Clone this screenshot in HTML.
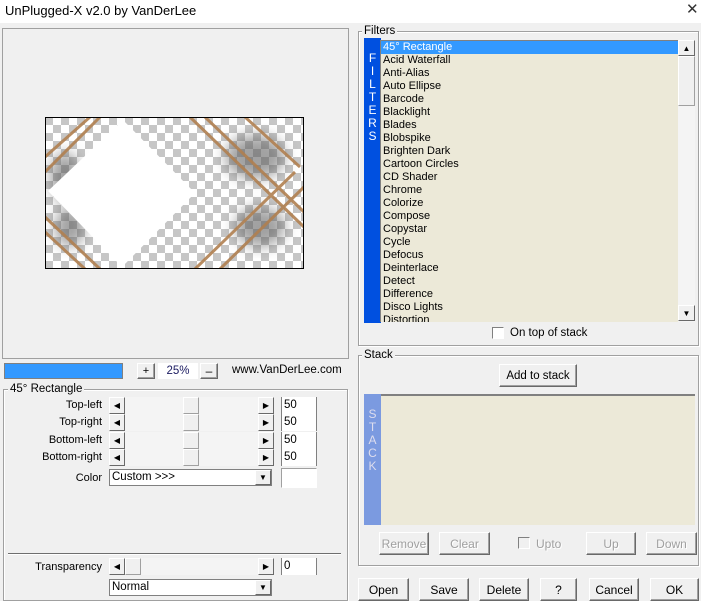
<!DOCTYPE html>
<html><head><meta charset="utf-8"><style>
*{box-sizing:border-box;margin:0;padding:0}
body{width:701px;height:601px;background:#f0f0f0;font-family:"Liberation Sans",Arial,sans-serif;font-size:11px;color:#000;position:relative;overflow:hidden}
.a{position:absolute}
.grp{position:absolute;border:1px solid #a0a0a0;box-shadow:inset 1px 1px 0 #fff, 1px 1px 0 #fff}
.lg{position:absolute;background:#f0f0f0;padding:0 2px;font-size:11px;line-height:12px}
.btn{position:absolute;background:#f0f0f0;border:1px solid;border-color:#fff #696969 #696969 #fff;box-shadow:inset -1px -1px 0 #a0a0a0;text-align:center;font-size:12px;display:flex;align-items:center;justify-content:center}
.dis{color:#a0a0a0;text-shadow:1px 1px 0 #fff}
.sl{position:absolute;height:17px;background:#f4f4f4}
.arr{position:absolute;width:16px;height:17px;background:#f0f0f0;border:1px solid;border-color:#fff #696969 #696969 #fff;font-size:8px;display:flex;align-items:center;justify-content:center}
.th{position:absolute;width:16px;height:17px;background:#f0f0f0;border:1px solid;border-color:#fff #a0a0a0 #a0a0a0 #fff}
.ed{position:absolute;width:36px;height:17px;background:#fff;border-left:1px solid #808080;border-right:1px solid #808080;font-size:11.5px;padding-left:2px;line-height:16px}
.lab{position:absolute;text-align:right;width:95px;font-size:11px}
.cb{position:absolute;background:#fff;border:1px solid #808080;height:17px;font-size:11.5px;padding-left:2px;line-height:15px}
.li div{height:13px;line-height:13px;padding-left:2px;font-size:11px}
</style></head><body>
<div class="a" style="left:0;top:0;width:701px;height:23px;background:#fff"></div>
<div class="a" style="left:5px;top:3px;font-size:13px">UnPlugged-X v2.0 by VanDerLee</div>
<div class="a" style="left:686px;top:0px;font-size:15px;color:#333">✕</div>

<div class="a" style="left:2px;top:28px;width:347px;height:331px;border:1px solid #a0a0a0"></div>
<svg class="a" style="left:45px;top:117px" width="259" height="152" viewBox="0 0 259 152">
<defs><pattern id="ck" width="16" height="16" patternUnits="userSpaceOnUse"><rect width="16" height="16" fill="#fff"/><rect width="8" height="8" fill="#c6c6c6"/><rect x="8" y="8" width="8" height="8" fill="#c6c6c6"/></pattern>
<filter id="bl"><feGaussianBlur stdDeviation="7"/></filter></defs>
<rect width="259" height="152" fill="url(#ck)"/>
<g filter="url(#bl)" fill="#555" opacity=".55"><ellipse cx="210" cy="40" rx="30" ry="22"/><ellipse cx="215" cy="110" rx="25" ry="20"/><ellipse cx="20" cy="60" rx="15" ry="25"/><ellipse cx="25" cy="110" rx="15" ry="20"/></g>
<g stroke="#b08050" stroke-width="3" fill="none" opacity=".9">
<path d="M0 40 L45 0 M0 55 L55 0 M0 100 L55 152 M0 115 L40 152 M145 0 L259 110 M160 0 L259 95 M250 55 L150 152 M259 70 L175 152 M200 0 L255 50"/>
</g>
<polygon points="3,74 78,3 150,76 77,150" fill="#fff"/>
<rect x=".5" y=".5" width="258" height="151" fill="none" stroke="#000"/>
</svg>

<div class="a" style="left:4px;top:363px;width:119px;height:16px;border:1px solid #808080;background:#3399ff"></div>
<div class="btn" style="left:137px;top:363px;width:18px;height:16px;font-size:11px">+</div>
<div class="a" style="left:158px;top:363px;width:40px;height:16px;background:#fff;text-align:center;font-size:11.5px;line-height:16px;color:#1a1a60">25%</div>
<div class="btn" style="left:200px;top:363px;width:18px;height:16px">–</div>
<div class="a" style="left:232px;top:364px;font-size:11.5px">www.VanDerLee.com</div>

<div class="grp" style="left:3px;top:389px;width:345px;height:212px"></div>
<div class="lg" style="left:8px;top:383px;font-size:11.5px">45° Rectangle</div>
<div class="lab" style="left:7px;top:399px">Top-left</div>
<div class="lab" style="left:7px;top:416px">Top-right</div>
<div class="lab" style="left:7px;top:434px">Bottom-left</div>
<div class="lab" style="left:7px;top:451px">Bottom-right</div>
<div class="sl" style="left:109px;top:397px;width:165px"></div><div class="arr" style="left:109px;top:397px">◀</div><div class="th" style="left:183px;top:397px"></div><div class="arr" style="left:258px;top:397px">▶</div><div class="ed" style="left:281px;top:397px">50</div>
<div class="sl" style="left:109px;top:414px;width:165px"></div><div class="arr" style="left:109px;top:414px">◀</div><div class="th" style="left:183px;top:414px"></div><div class="arr" style="left:258px;top:414px">▶</div><div class="ed" style="left:281px;top:414px">50</div>
<div class="sl" style="left:109px;top:432px;width:165px"></div><div class="arr" style="left:109px;top:432px">◀</div><div class="th" style="left:183px;top:432px"></div><div class="arr" style="left:258px;top:432px">▶</div><div class="ed" style="left:281px;top:432px">50</div>
<div class="sl" style="left:109px;top:449px;width:165px"></div><div class="arr" style="left:109px;top:449px">◀</div><div class="th" style="left:183px;top:449px"></div><div class="arr" style="left:258px;top:449px">▶</div><div class="ed" style="left:281px;top:449px">50</div>
<div class="lab" style="left:7px;top:472px">Color</div>
<div class="cb" style="left:109px;top:469px;width:163px">Custom &gt;&gt;&gt;</div><div class="arr" style="left:255px;top:470px;width:16px;height:15px">▼</div>
<div class="a" style="left:281px;top:468px;width:36px;height:20px;background:#fff;border:1px solid;border-color:#a0a0a0 #fff #fff #a0a0a0"></div>
<div class="a" style="left:8px;top:553px;width:333px;height:2px;background:#6e6e6e;border-bottom:1px solid #fff"></div>
<div class="lab" style="left:7px;top:561px">Transparency</div>
<div class="sl" style="left:109px;top:558px;width:165px"></div><div class="arr" style="left:109px;top:558px">◀</div><div class="th" style="left:125px;top:558px"></div><div class="arr" style="left:258px;top:558px">▶</div><div class="ed" style="left:281px;top:558px">0</div>
<div class="cb" style="left:109px;top:579px;width:163px">Normal</div><div class="arr" style="left:255px;top:580px;width:16px;height:15px">▼</div>

<div class="grp" style="left:358px;top:31px;width:341px;height:315px"></div>
<div class="lg" style="left:362px;top:25px;font-size:11.5px">Filters</div>
<div class="a" style="left:364px;top:38px;width:17px;height:285px;background:#0050e0;color:#fff;font-size:12px;text-align:center;line-height:13px;padding-top:14px">F<br>I<br>L<br>T<br>E<br>R<br>S</div>
<div class="a li" style="left:380px;top:40px;width:298px;height:282px;background:#ece9d8;overflow:hidden;border-top:1px solid #808080;border-left:1px solid #808080">
<div style="background:#3399ff;color:#fff">45° Rectangle</div><div>Acid Waterfall</div><div>Anti-Alias</div><div>Auto Ellipse</div><div>Barcode</div><div>Blacklight</div><div>Blades</div><div>Blobspike</div><div>Brighten Dark</div><div>Cartoon Circles</div><div>CD Shader</div><div>Chrome</div><div>Colorize</div><div>Compose</div><div>Copystar</div><div>Cycle</div><div>Defocus</div><div>Deinterlace</div><div>Detect</div><div>Difference</div><div>Disco Lights</div><div>Distortion</div></div>
<div class="a" style="left:678px;top:40px;width:17px;height:282px;background:#f4f4f4"></div>
<div class="arr" style="left:678px;top:40px;width:17px;height:16px">▲</div>
<div class="th" style="left:678px;top:56px;width:17px;height:50px"></div>
<div class="arr" style="left:678px;top:305px;width:17px;height:16px">▼</div>
<div class="a" style="left:492px;top:327px;width:12px;height:12px;background:#fff;border:1px solid;border-color:#808080 #fff #fff #808080"></div>
<div class="a" style="left:510px;top:327px;font-size:11.5px">On top of stack</div>

<div class="grp" style="left:358px;top:355px;width:341px;height:211px"></div>
<div class="lg" style="left:362px;top:349px;font-size:11.5px">Stack</div>
<div class="btn" style="left:499px;top:364px;width:78px;height:23px;font-size:11.5px">Add to stack</div>
<div class="a" style="left:364px;top:394px;width:17px;height:131px;background:#7b9ae0;color:#dde;font-size:12px;text-align:center;line-height:13px;padding-top:14px">S<br>T<br>A<br>C<br>K</div>
<div class="a" style="left:381px;top:394px;width:314px;height:131px;background:#ece9d8;border-top:2px solid #808080"></div>
<div class="btn dis" style="left:379px;top:532px;width:50px;height:23px">Remove</div>
<div class="btn dis" style="left:439px;top:532px;width:51px;height:23px">Clear</div>
<div class="a" style="left:518px;top:537px;width:12px;height:12px;border:1px solid;border-color:#808080 #fff #fff #808080"></div>
<div class="a dis" style="left:536px;top:537px;font-size:12px">Upto</div>
<div class="btn dis" style="left:586px;top:532px;width:50px;height:23px">Up</div>
<div class="btn dis" style="left:646px;top:532px;width:51px;height:23px">Down</div>

<div class="btn" style="left:358px;top:578px;width:51px;height:23px">Open</div>
<div class="btn" style="left:419px;top:578px;width:50px;height:23px">Save</div>
<div class="btn" style="left:479px;top:578px;width:50px;height:23px">Delete</div>
<div class="btn" style="left:540px;top:578px;width:37px;height:23px">?</div>
<div class="btn" style="left:589px;top:578px;width:50px;height:23px">Cancel</div>
<div class="btn" style="left:650px;top:578px;width:49px;height:23px">OK</div>
</body></html>
